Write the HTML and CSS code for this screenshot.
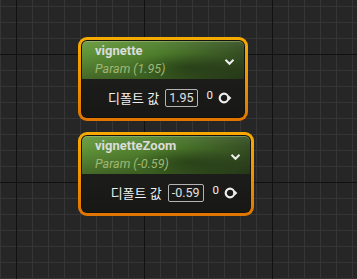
FILE: index.html
```html
<!DOCTYPE html>
<html lang="ko">
<head>
  <meta charset="UTF-8" />
  <meta name="viewport" content="width=device-width, initial-scale=1.0" />
  <title>Material Graph</title>
  <link rel="stylesheet" href="styles.css">
</head>
<body>
  <div class="graph">

    <!-- vignette -->
    <div class="node node-a">
      <div class="node-inner">
        <div class="node-head">
          <div class="titles">
            <div class="title">vignette</div>
            <div class="subtitle">Param (1.95)</div>
          </div>
          <svg class="chevron" width="11" height="8" viewBox="0 0 11 8">
            <path d="M1.5 1.8 L5.5 5.8 L9.5 1.8" fill="none" stroke="#eee" stroke-width="2" />
          </svg>
        </div>
        <div class="node-body">
          <span class="label">디폴트 값</span>
          <span class="value">1.95</span>
          <span class="pin-name">0</span>
          <svg class="pin" width="14" height="12" viewBox="0 0 14 12">
            <circle cx="6" cy="6" r="4.3" fill="none" stroke="#eee" stroke-width="2.2" />
            <path d="M11 3.8 L13.4 6 L11 8.2 Z" fill="#eee" />
          </svg>
        </div>
      </div>
    </div>

    <!-- vignetteZoom -->
    <div class="node node-b">
      <div class="node-inner">
        <div class="node-head">
          <div class="titles">
            <div class="title">vignetteZoom</div>
            <div class="subtitle">Param (-0.59)</div>
          </div>
          <svg class="chevron" width="11" height="8" viewBox="0 0 11 8">
            <path d="M1.5 1.8 L5.5 5.8 L9.5 1.8" fill="none" stroke="#eee" stroke-width="2" />
          </svg>
        </div>
        <div class="node-body">
          <span class="label">디폴트 값</span>
          <span class="value">-0.59</span>
          <span class="pin-name">0</span>
          <svg class="pin" width="14" height="12" viewBox="0 0 14 12">
            <circle cx="6" cy="6" r="4.3" fill="none" stroke="#eee" stroke-width="2.2" />
            <path d="M11 3.8 L13.4 6 L11 8.2 Z" fill="#eee" />
          </svg>
        </div>
      </div>
    </div>

  </div>
</body>
</html>
```

FILE: styles.css
```css
body {
  margin: 0;
  font-family: Roboto, "Noto Sans CJK KR", sans-serif;
  background-color: #262626;
}

.graph {
  position: relative;
  width: 357px;
  height: 279px;
  overflow: hidden;
  background-color: #262626;
  background-image:
    linear-gradient(to right, #111 1px, transparent 1px),
    linear-gradient(to bottom, #111 1px, transparent 1px),
    linear-gradient(to right, #353535 1px, transparent 1px),
    linear-gradient(to bottom, #353535 1px, transparent 1px);
  background-size: 128px 128px, 128px 128px, 16px 16px, 16px 16px;
  background-position: 16px 0, 0 54px, 0 0, 0 6px;
}

/* nodes sit on the free canvas */
.node {
  position: absolute;
  left: 78px;
  padding: 3px;
  border-radius: 9px;
  background: linear-gradient(to bottom, #f7aa00, #f09400 50%, #e07400);
  box-sizing: border-box;
}

.node-a {
  top: 37px;
  width: 170px;
}

.node-b {
  top: 132px;
  width: 176px;
}

.node-inner {
  padding: 1px;
  border-radius: 6px;
  background: #14110c;
  overflow: hidden;
}

.node-head {
  display: flex;
  align-items: center;
  height: 38px;
  padding: 0 9px 0 13px;
  border-radius: 5px 5px 0 0;
  background:
    radial-gradient(ellipse 60px 14px at 105px 26px, rgba(0, 0, 0, 0.28), transparent),
    linear-gradient(to bottom, rgba(255, 255, 255, 0.08), rgba(0, 0, 0, 0) 30%, rgba(0, 0, 0, 0.3)),
    linear-gradient(to right, #63963a, #4f802c 45%, #344d22);
  box-shadow: inset 0 1px 0 rgba(200, 230, 160, 0.35);
}

.titles {
  flex: 1;
}

.title {
  font-size: 13px;
  font-weight: bold;
  color: #dcdcdc;
  line-height: 16px;
}

.subtitle {
  font-size: 12.5px;
  font-style: italic;
  color: #9fb874;
  line-height: 17px;
  margin-top: 1px;
}

.chevron {
  margin-top: 3px;
}

.node-body {
  display: flex;
  align-items: center;
  justify-content: flex-end;
  height: 37px;
  padding: 0 12px 1px 0;
  border-radius: 0 0 5px 5px;
  background: linear-gradient(to bottom, #1c1d1b, #171716);
  color: #f0f0f0;
}

.label {
  font-size: 13px;
  margin-right: 6px;
}

.value {
  font-size: 12.5px;
  color: #e0e0e0;
  line-height: 16px;
  padding: 0 3px;
  border: 1px solid #b4b4b4;
  border-radius: 2px;
}

.pin-name {
  font-size: 11.5px;
  margin: 0 5px 0 9px;
  position: relative;
  top: -3px;
}

.pin {
  display: block;
}
```
